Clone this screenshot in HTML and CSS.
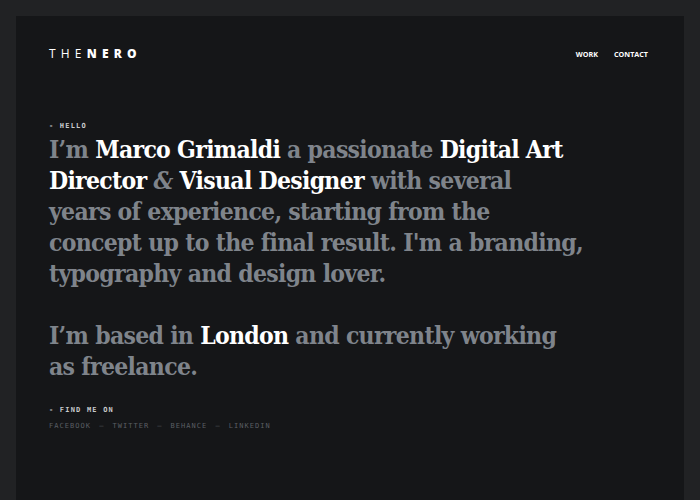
FILE: index.html
```html
<!DOCTYPE html>
<html lang="en">
<head>
<meta charset="utf-8">
<title>TheNero — Marco Grimaldi</title>
<link rel="stylesheet" href="styles.css">
</head>
<body>
<div class="frame">
  <header class="header">
    <a class="logo" href="#"><span class="logo-thin">THE</span><span class="logo-bold">NERO</span></a>
    <nav class="nav">
      <a href="#">WORK</a>
      <a href="#">CONTACT</a>
    </nav>
  </header>
  <main class="intro">
    <p class="label">- HELLO</p>
    <p class="lead">I’m <strong>Marco Grimaldi</strong> a passionate <strong>Digital Art</strong><br><strong>Director</strong> <em class="amp">&amp;</em> <strong>Visual Designer</strong> with several<br>years of experience, starting from the<br>concept up to the final result. I'm a branding,<br>typography and design lover.</p>
    <p class="lead last">I’m based in <strong>London</strong> and currently working<br>as freelance.</p>
    <p class="label">- FIND ME ON</p>
    <ul class="social">
      <li><a href="#">FACEBOOK</a></li>
      <li class="sep">–</li>
      <li><a href="#">TWITTER</a></li>
      <li class="sep">–</li>
      <li><a href="#">BEHANCE</a></li>
      <li class="sep">–</li>
      <li><a href="#">LINKEDIN</a></li>
    </ul>
  </main>
</div>
</body>
</html>
```
FILE: styles.css
```css
html, body {
  margin: 0;
  padding: 0;
  height: 100%;
}
body {
  background: #212224;
  padding: 16px 16px 0;
  box-sizing: border-box;
}
.frame {
  background: #151618;
  min-height: 100%;
  box-sizing: border-box;
  padding: 0 36px 0 33px;
}
a {
  text-decoration: none;
  color: inherit;
}
.header {
  display: flex;
  justify-content: space-between;
  align-items: center;
  height: 75px;
}
.logo {
  font-family: "Open Sans", sans-serif;
  font-size: 12px;
  letter-spacing: 5.2px;
  color: #fff;
  line-height: 1;
}
.logo-thin {
  font-weight: 400;
}
.logo-bold {
  font-weight: 800;
}
.nav {
  display: flex;
  gap: 16px;
  font-family: "Open Sans", sans-serif;
  font-weight: 700;
  font-size: 7.2px;
  color: #fff;
  padding-top: 1px;
}
.intro {
  padding-top: 30px;
}
.label {
  margin: 0;
  font-family: "DejaVu Sans Mono", monospace;
  font-weight: 700;
  font-size: 7px;
  letter-spacing: 1.2px;
  color: #c9cacc;
  line-height: 10px;
}
.lead {
  margin: 3px 0 31px;
  font-family: "DejaVu Serif", serif;
  font-stretch: condensed;
  font-weight: 700;
  font-size: 24.5px;
  letter-spacing: -0.7px;
  line-height: 31px;
  color: #7f848b;
}
.lead.last {
  margin-bottom: 23px;
}
.lead strong {
  color: #fff;
  font-weight: 700;
}
.amp {
  font-style: italic;
}
.social {
  list-style: none;
  margin: 6px 0 0;
  padding: 0;
  display: flex;
  gap: 8px;
  font-family: "DejaVu Sans Mono", monospace;
  font-size: 7px;
  letter-spacing: 1.05px;
  color: #5a5e63;
  line-height: 10px;
}
```
